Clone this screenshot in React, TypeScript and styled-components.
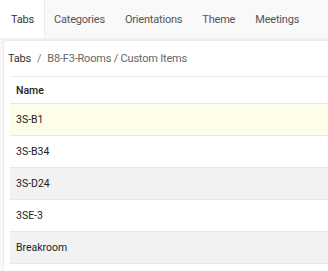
import React from 'react';
import styled, { createGlobalStyle } from 'styled-components';

const GlobalStyle = createGlobalStyle`
  html, body {
    margin: 0;
    padding: 0;
    background: #f8f8f8;
    font-family: Roboto, 'Liberation Sans', sans-serif;
  }
`;

const tabs = ['Tabs', 'Categories', 'Orientations', 'Theme', 'Meetings'];
const rooms = ['3S-B1', '3S-B34', '3S-D24', '3SE-3', 'Breakroom'];

function App() {
  return (
    <>
      <GlobalStyle />
      <Page>
        <TabBar>
          {tabs.map((t, i) => (
            <Tab key={t} active={i === 0}>
              {t}
            </Tab>
          ))}
        </TabBar>
        <Panel>
          <Breadcrumb>
            <Crumb current>Tabs</Crumb>
            <Sep>/</Sep>
            <Crumb>B8-F3-Rooms / Custom Items</Crumb>
          </Breadcrumb>
          <Table>
            <HeaderRow>Name</HeaderRow>
            {rooms.map((r, i) => (
              <Row key={r} tone={i === 0 ? 'hover' : i % 2 === 0 ? 'stripe' : 'plain'}>
                {r}
              </Row>
            ))}
          </Table>
        </Panel>
      </Page>
    </>
  );
}

const Page = styled.div`
  width: 328px;
  height: 271px;
  overflow: hidden;
  background: #f8f8f8;
`;
const TabBar = styled.div`
  display: flex;
  height: 38px;
  background: #f9f9f9;
  border-bottom: 2px solid #efefef;
`;
const Tab = styled.div<{ active?: boolean }>`
  display: flex;
  align-items: center;
  padding: 0 9.5px 0 ${(p) => (p.active ? '11px' : '9.5px')};
  font-size: 11px;
  letter-spacing: -0.2px;
  color: ${(p) => (p.active ? '#333' : '#555')};
  background: ${(p) => (p.active ? '#ffffff' : 'transparent')};
  border-right: 1px solid ${(p) => (p.active ? '#ececec' : 'transparent')};
`;
const Panel = styled.div`
  margin-left: 3px;
  background: #ffffff;
  border: 1px solid #ececec;
  border-right: none;
  border-radius: 4px 0 0 0;
  height: 240px;
`;
const Breadcrumb = styled.div`
  display: flex;
  align-items: center;
  height: 35px;
  padding-left: 4px;
  font-size: 11px;
  letter-spacing: -0.2px;
  color: #666;
`;
const Crumb = styled.span<{ current?: boolean }>`
  color: ${(p) => (p.current ? '#333' : '#666')};
`;
const Sep = styled.span`
  margin: 0 6px;
  color: #777;
`;
const Table = styled.div`
  display: flex;
  flex-direction: column;
  margin-left: 6px;
  border-top: 1px solid #eeeeee;
`;
const HeaderRow = styled.div`
  display: flex;
  align-items: center;
  height: 26px;
  padding-left: 6px;
  font-size: 10.5px;
  font-weight: 500;
  color: #222;
  border-bottom: 1px solid #e8e8e8;
`;
const toneBg: Record<string, string> = {
  hover: '#fdfde9',
  plain: '#ffffff',
  stripe: '#f2f2f2',
};
const Row = styled.div<{ tone: string }>`
  display: flex;
  align-items: center;
  height: 31px;
  padding-left: 6px;
  font-size: 10.5px;
  color: #222;
  background: ${(p) => toneBg[p.tone]};
  border-bottom: 1px solid #e9e9e9;
`;

export default App;
